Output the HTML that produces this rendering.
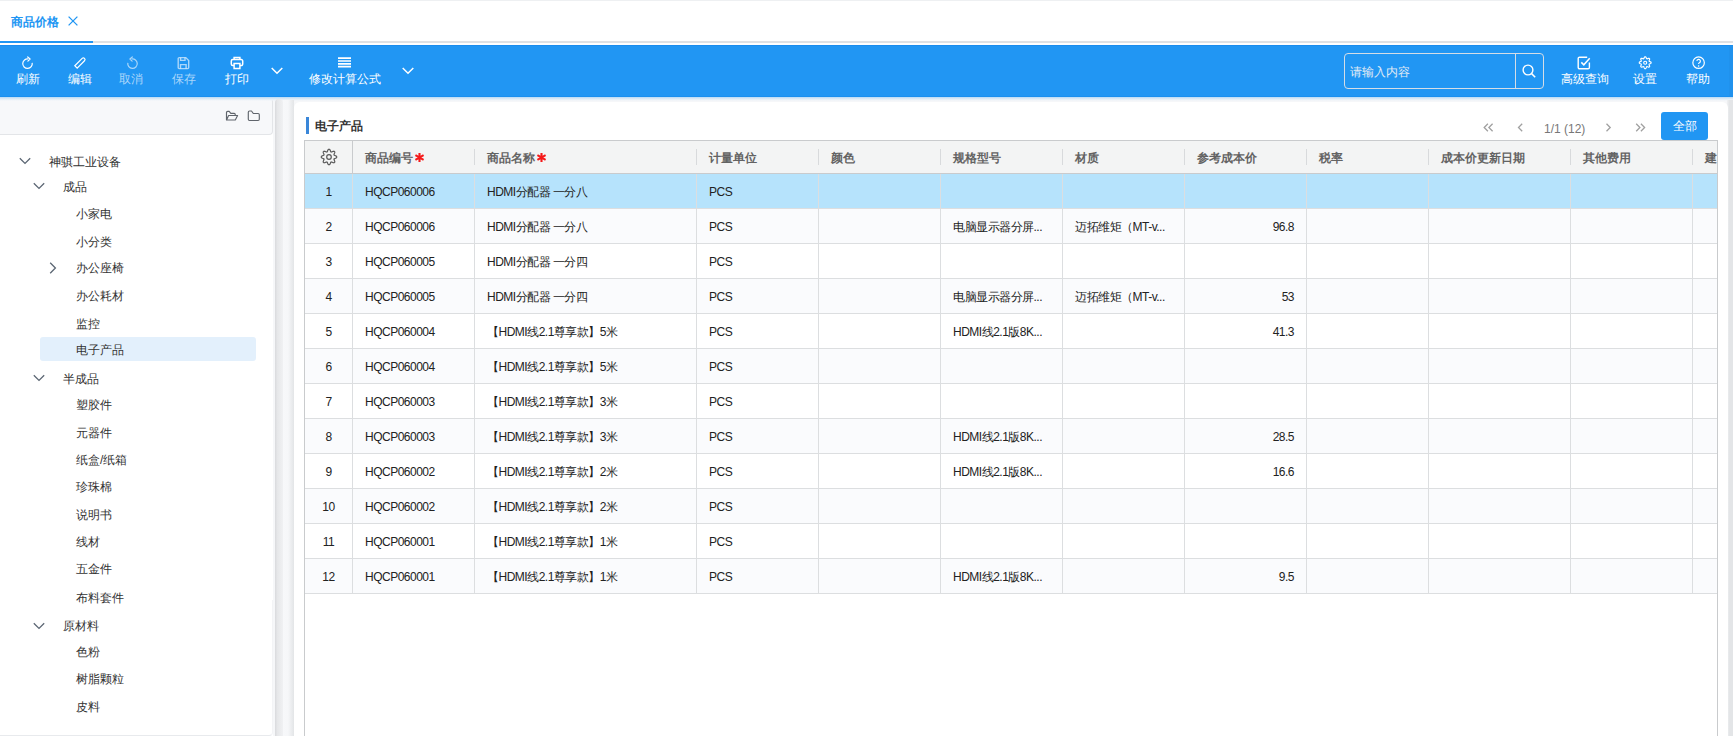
<!DOCTYPE html><html><head><meta charset="utf-8"><style>*{box-sizing:border-box;margin:0;padding:0}
html,body{width:1733px;height:736px;overflow:hidden;background:#fff;font-family:"Liberation Sans",sans-serif;font-size:12px;color:#333}
.abs{position:absolute}
#tabtxt{left:11px;top:15px;font-weight:bold;color:#2196f3;line-height:14px}
#toolbar{left:0;top:45px;width:1733px;height:52px;background:#2196f3}
.tbl{position:absolute;top:72px;line-height:14px;text-align:center;white-space:nowrap}
.tree{position:absolute;line-height:14px;white-space:nowrap;color:#333}
#tbl{overflow:hidden;background:#fff;border:1px solid #c9cbcd}
.c{position:absolute;line-height:14px;white-space:nowrap;color:#222;letter-spacing:-0.5px}
.h{position:absolute;line-height:14px;white-space:nowrap;color:#636363;font-weight:bold;top:10px}
.req{color:#f00;font-weight:bold}
.pg{position:absolute;line-height:14px}
</style></head><body><div class="abs" style="left:0;top:0;width:1733px;height:1px;background:#eef0f2"></div>
<div class="abs" style="left:0;top:41px;width:1733px;height:2px;background:#dfe1e4"></div>
<div class="abs" style="left:0;top:41px;width:93px;height:2px;background:#2196f3"></div>
<div class="abs" id="tabtxt">商品价格</div>
<svg class="abs" style="left:68px;top:16px" width="10" height="10" viewBox="0 0 10 10"><path d="M0.6 0.6L9.4 9.4M9.4 0.6L0.6 9.4" stroke="#2196f3" stroke-width="1.3" fill="none"/></svg>
<div class="abs" id="toolbar"></div>
<div class="abs" style="left:0;top:45px;width:1733px;height:1px;background:#1a8cee"></div>
<div class="abs" style="left:0;top:96px;width:1733px;height:1px;background:#1a8fef"></div>
<div class="abs" style="left:1729px;top:45px;width:4px;height:52px;background:#1f8fea;opacity:.6"></div>
<div class="tbl" style="left:-2.3999999999999986px;width:60px;color:#fff">刷新</div>
<svg class="abs" style="left:21px;top:56px" width="14" height="14" viewBox="0 0 14 14"><path d="M7.33 2.97A4.75 4.75 0 1 0 11.18 6.83" stroke="#fff" stroke-width="1.2" fill="none"/><path d="M6.7 1.0L9.1 3.0L6.9 5.1" stroke="#fff" stroke-width="1.2" fill="none" stroke-linejoin="round" stroke-linecap="round"/></svg>
<div class="tbl" style="left:50.0px;width:60px;color:#fff">编辑</div>
<svg class="abs" style="left:73px;top:56px" width="14" height="14" viewBox="0 0 14 14"><g transform="translate(7.3 6.6) rotate(-45)"><path d="M-6.1 -1.65H4.3A1.65 1.65 0 0 1 4.3 1.65H-6.1Z" stroke="#fff" stroke-width="1.2" fill="none"/></g></svg>
<div class="tbl" style="left:101.30000000000001px;width:60px;color:rgba(255,255,255,.62)">取消</div>
<svg class="abs" style="left:125px;top:56px" width="14" height="14" viewBox="0 0 14 14"><path d="M6.67 2.97A4.75 4.75 0 1 1 2.82 6.83" stroke="rgba(255,255,255,.62)" stroke-width="1.2" fill="none"/><path d="M7.3 1.0L4.9 3.0L7.1 5.1" stroke="rgba(255,255,255,.62)" stroke-width="1.2" fill="none" stroke-linejoin="round" stroke-linecap="round"/></svg>
<div class="tbl" style="left:153.5px;width:60px;color:rgba(255,255,255,.62)">保存</div>
<svg class="abs" style="left:177px;top:56px" width="13" height="14" viewBox="0 0 13 14"><path d="M2.2 1.6h6.6l2.9 2.9v7.1a1 1 0 0 1-1 1H2.2a1 1 0 0 1-1-1V2.6a1 1 0 0 1 1-1Z" stroke="rgba(255,255,255,.62)" stroke-width="1.4" fill="none"/><path d="M3.6 1.8v2.6h4.4V1.8M3.5 12.4V8.6h5.6v3.8" stroke="rgba(255,255,255,.62)" stroke-width="1.4" fill="none"/></svg>
<div class="tbl" style="left:207.0px;width:60px;color:#fff">打印</div>
<svg class="abs" style="left:230px;top:56px" width="14" height="14" viewBox="0 0 14 14"><path d="M4.1 3.5V1.6h5.8v1.9M4 9.6H2.8a1.5 1.5 0 0 1-1.5-1.5V5.1a1.5 1.5 0 0 1 1.5-1.5h8.4a1.5 1.5 0 0 1 1.5 1.5v3a1.5 1.5 0 0 1-1.5 1.5H10" stroke="#fff" stroke-width="1.5" fill="none"/><path d="M4.1 7.6h5.8v4.8H4.1Z" stroke="#fff" stroke-width="1.5" fill="none"/></svg>
<svg class="abs" style="left:270.5px;top:67px" width="12" height="8" viewBox="0 0 12 8"><path d="M0.7 1L6 6.3 11.3 1" stroke="#fff" stroke-width="1.5" fill="none"/></svg>
<div class="tbl" style="left:299.5px;width:90px;color:#fff">修改计算公式</div>
<svg class="abs" style="left:338px;top:57px" width="13" height="12" viewBox="0 0 13 12"><path d="M0 1.2h13M0 4h13M0 6.8h13M0 9.6h13" stroke="#fff" stroke-width="1.7"/></svg>
<svg class="abs" style="left:401.5px;top:67px" width="12" height="8" viewBox="0 0 12 8"><path d="M0.7 1L6 6.3 11.3 1" stroke="#fff" stroke-width="1.5" fill="none"/></svg>
<div class="abs" style="left:1344px;top:53px;width:200px;height:36px;border:1px solid #d5dde6;border-radius:4px"></div>
<div class="abs" style="left:1515px;top:54px;width:1px;height:34px;background:#d5dde6"></div>
<div class="abs" style="left:1350px;top:65px;line-height:14px;color:#e4ecf4">请输入内容</div>
<svg class="abs" style="left:1522px;top:64px" width="15" height="14" viewBox="0 0 15 14"><circle cx="6" cy="6" r="4.9" stroke="#fff" stroke-width="1.4" fill="none"/><path d="M9.6 9.6L13.2 13.2" stroke="#fff" stroke-width="1.5"/></svg>
<div class="tbl" style="left:1554.5px;width:60px;color:#fff">高级查询</div>
<svg class="abs" style="left:1577px;top:56px" width="15" height="14" viewBox="0 0 15 14"><path d="M12.4 6.5v4.9a1.4 1.4 0 0 1-1.4 1.4H2.6a1.4 1.4 0 0 1-1.4-1.4V2.6a1.4 1.4 0 0 1 1.4-1.4h7.6" stroke="#fff" stroke-width="1.4" fill="none"/><path d="M4.3 6.4l2.5 2.4 5.9-6.6" stroke="#fff" stroke-width="1.5" fill="none"/></svg>
<div class="tbl" style="left:1615.3px;width:60px;color:#fff">设置</div>
<svg class="abs" style="left:1638px;top:56px" width="14" height="14" viewBox="0 0 14 14"><path d="M7.20 0.80 L7.43 0.80 L7.66 0.84 L7.87 1.07 L8.04 1.37 L8.19 1.70 L8.32 2.03 L8.43 2.33 L8.54 2.59 L8.69 2.67 L8.85 2.73 L9.00 2.79 L9.16 2.85 L9.42 2.74 L9.71 2.60 L10.03 2.46 L10.37 2.33 L10.71 2.25 L11.02 2.23 L11.20 2.37 L11.37 2.53 L11.53 2.70 L11.67 2.88 L11.65 3.19 L11.57 3.53 L11.44 3.87 L11.30 4.19 L11.16 4.48 L11.05 4.74 L11.11 4.90 L11.17 5.05 L11.23 5.21 L11.31 5.36 L11.57 5.47 L11.87 5.58 L12.20 5.71 L12.53 5.86 L12.83 6.03 L13.06 6.24 L13.10 6.47 L13.10 6.70 L13.10 6.93 L13.06 7.16 L12.83 7.37 L12.53 7.54 L12.20 7.69 L11.87 7.82 L11.57 7.93 L11.31 8.04 L11.23 8.19 L11.17 8.35 L11.11 8.50 L11.05 8.66 L11.16 8.92 L11.30 9.21 L11.44 9.53 L11.57 9.87 L11.65 10.21 L11.67 10.52 L11.53 10.70 L11.37 10.87 L11.20 11.03 L11.02 11.17 L10.71 11.15 L10.37 11.07 L10.03 10.94 L9.71 10.80 L9.42 10.66 L9.16 10.55 L9.00 10.61 L8.85 10.67 L8.69 10.73 L8.54 10.81 L8.43 11.07 L8.32 11.37 L8.19 11.70 L8.04 12.03 L7.87 12.33 L7.66 12.56 L7.43 12.60 L7.20 12.60 L6.97 12.60 L6.74 12.56 L6.53 12.33 L6.36 12.03 L6.21 11.70 L6.08 11.37 L5.97 11.07 L5.86 10.81 L5.71 10.73 L5.55 10.67 L5.40 10.61 L5.24 10.55 L4.98 10.66 L4.69 10.80 L4.37 10.94 L4.03 11.07 L3.69 11.15 L3.38 11.17 L3.20 11.03 L3.03 10.87 L2.87 10.70 L2.73 10.52 L2.75 10.21 L2.83 9.87 L2.96 9.53 L3.10 9.21 L3.24 8.92 L3.35 8.66 L3.29 8.50 L3.23 8.35 L3.17 8.19 L3.09 8.04 L2.83 7.93 L2.53 7.82 L2.20 7.69 L1.87 7.54 L1.57 7.37 L1.34 7.16 L1.30 6.93 L1.30 6.70 L1.30 6.47 L1.34 6.24 L1.57 6.03 L1.87 5.86 L2.20 5.71 L2.53 5.58 L2.83 5.47 L3.09 5.36 L3.17 5.21 L3.23 5.05 L3.29 4.90 L3.35 4.74 L3.24 4.48 L3.10 4.19 L2.96 3.87 L2.83 3.53 L2.75 3.19 L2.73 2.88 L2.87 2.70 L3.03 2.53 L3.20 2.37 L3.38 2.23 L3.69 2.25 L4.03 2.33 L4.37 2.46 L4.69 2.60 L4.98 2.74 L5.24 2.85 L5.40 2.79 L5.55 2.73 L5.71 2.67 L5.86 2.59 L5.97 2.33 L6.08 2.03 L6.21 1.70 L6.36 1.37 L6.53 1.07 L6.74 0.84 L6.97 0.80Z" stroke="#fff" stroke-width="1.15" fill="none" stroke-linejoin="round"/><circle cx="7.2" cy="6.7" r="1.5" stroke="#fff" stroke-width="1.15" fill="none"/></svg>
<div class="tbl" style="left:1668.4px;width:60px;color:#fff">帮助</div>
<svg class="abs" style="left:1692px;top:56px" width="14" height="14" viewBox="0 0 14 14"><circle cx="6.6" cy="6.7" r="5.75" stroke="#fff" stroke-width="1.2" fill="none"/><path d="M4.9 5.1a1.75 1.75 0 1 1 2.5 1.6c-.5.25-.8.55-.8 1.1v.3" stroke="#fff" stroke-width="1.15" fill="none"/><circle cx="6.6" cy="9.9" r=".75" fill="#fff"/></svg>
<div class="abs" style="left:0;top:97px;width:1733px;height:639px;background:#f6f7f9"></div>
<div class="abs" style="left:0;top:97px;width:273px;height:639px;background:#fff"></div>
<div class="abs" style="left:0;top:600px;width:273px;height:136px;border-bottom:1px solid #e8eaed;border-right:1px solid #f3f4f6;border-radius:0 0 4px 0"></div>
<div class="abs" style="left:0;top:98px;width:273px;height:37px;background:#f7f8fa;border:1px solid #e3e5e8;border-left:none;border-top:none;border-radius:0 4px 4px 0"></div>
<div class="abs" style="left:0;top:97px;width:1733px;height:4px;background:linear-gradient(#b5daf6,#d6e7f5 35%,#ecf2f8 70%,rgba(247,248,250,0))"></div>
<div class="abs" style="left:275px;top:99px;width:8px;height:637px;border-radius:4px 4px 0 0;background:linear-gradient(90deg,#d9dadd,#e6e7e9 30%,#f0f1f3 100%)"></div>
<div class="abs" style="left:283px;top:100px;width:11px;height:636px;background:linear-gradient(90deg,#f7f8fa,#f6f7f9 45%,#e3e5e7 100%)"></div>
<div class="abs" style="left:1727px;top:100px;width:6px;height:636px;background:linear-gradient(90deg,#f0f1f3,#e3e5e7 40%,#e3e5e7)"></div>
<div class="abs" style="left:294px;top:102px;width:1434px;height:650px;background:#fff;border-radius:6px"></div>
<svg class="abs" style="left:224px;top:109px" width="15" height="13" viewBox="0 0 15 13"><path d="M2.5 11V3.6a1.2 1.2 0 0 1 1.2-1.2H5.2L6.8 4.3H10.2a1 1 0 0 1 1 1V6.4M2.5 11L4.6 6.5H13.6L11.3 11Z" stroke="#60656c" stroke-width="1.15" fill="none" stroke-linejoin="round"/></svg>
<svg class="abs" style="left:246px;top:109px" width="15" height="13" viewBox="0 0 15 13"><path d="M2.3 10.3V3.2a1.2 1.2 0 0 1 1.2-1.2H5.5L7.3 4.5H12.1a1.2 1.2 0 0 1 1.2 1.2V10.3a1.2 1.2 0 0 1-1.2 1.2H3.5a1.2 1.2 0 0 1-1.2-1.2Z" stroke="#60656c" stroke-width="1.15" fill="none" stroke-linejoin="round"/></svg>
<div class="abs" style="left:40px;top:337px;width:216px;height:24px;background:#e3f0fc;border-radius:3px"></div>
<div class="tree" style="left:49px;top:154.8px">神骐工业设备</div>
<svg class="abs" style="left:19px;top:157.3px" width="12" height="8" viewBox="0 0 12 8"><path d="M0.8 1.2L6 6.4 11.2 1.2" stroke="#5b6673" stroke-width="1.3" fill="none"/></svg>
<div class="tree" style="left:63px;top:179.8px">成品</div>
<svg class="abs" style="left:33px;top:182.3px" width="12" height="8" viewBox="0 0 12 8"><path d="M0.8 1.2L6 6.4 11.2 1.2" stroke="#5b6673" stroke-width="1.3" fill="none"/></svg>
<div class="tree" style="left:76px;top:206.9px">小家电</div>
<div class="tree" style="left:76px;top:234.7px">小分类</div>
<div class="tree" style="left:76px;top:261.0px">办公座椅</div>
<svg class="abs" style="left:49px;top:261.5px" width="8" height="12" viewBox="0 0 8 12"><path d="M1.2 0.8L6.4 6 1.2 11.2" stroke="#5b6673" stroke-width="1.3" fill="none"/></svg>
<div class="tree" style="left:76px;top:288.5px">办公耗材</div>
<div class="tree" style="left:76px;top:316.5px">监控</div>
<div class="tree" style="left:76px;top:343.2px">电子产品</div>
<div class="tree" style="left:63px;top:371.9px">半成品</div>
<svg class="abs" style="left:33px;top:374.4px" width="12" height="8" viewBox="0 0 12 8"><path d="M0.8 1.2L6 6.4 11.2 1.2" stroke="#5b6673" stroke-width="1.3" fill="none"/></svg>
<div class="tree" style="left:76px;top:398.2px">塑胶件</div>
<div class="tree" style="left:76px;top:425.6px">元器件</div>
<div class="tree" style="left:76px;top:453.2px">纸盒/纸箱</div>
<div class="tree" style="left:76px;top:480.0px">珍珠棉</div>
<div class="tree" style="left:76px;top:507.6px">说明书</div>
<div class="tree" style="left:76px;top:535.4px">线材</div>
<div class="tree" style="left:76px;top:562.3px">五金件</div>
<div class="tree" style="left:76px;top:590.5px">布料套件</div>
<div class="tree" style="left:63px;top:619.1px">原材料</div>
<svg class="abs" style="left:33px;top:621.6px" width="12" height="8" viewBox="0 0 12 8"><path d="M0.8 1.2L6 6.4 11.2 1.2" stroke="#5b6673" stroke-width="1.3" fill="none"/></svg>
<div class="tree" style="left:76px;top:645.2px">色粉</div>
<div class="tree" style="left:76px;top:672.4px">树脂颗粒</div>
<div class="tree" style="left:76px;top:699.6px">皮料</div>
<div class="abs" style="left:306px;top:117px;width:3px;height:17px;background:#3a87d9"></div>
<div class="abs" style="left:315px;top:119px;font-weight:bold;line-height:14px;color:#333">电子产品</div>
<svg class="abs" style="left:1483px;top:123px" width="11" height="9" viewBox="0 0 11 9"><path d="M4.9 0.8L1.2 4.5 4.9 8.2M9.6 0.8L5.9 4.5 9.6 8.2" stroke="#a0a0a0" stroke-width="1.3" fill="none"/></svg>
<svg class="abs" style="left:1517px;top:123px" width="7" height="9" viewBox="0 0 7 9"><path d="M5.2 0.8L1.5 4.5 5.2 8.2" stroke="#a0a0a0" stroke-width="1.3" fill="none"/></svg>
<div class="pg" style="left:1544px;top:122px;color:#777">1/1 (12)</div>
<svg class="abs" style="left:1605px;top:123px" width="7" height="9" viewBox="0 0 7 9"><path d="M1.5 0.8L5.2 4.5 1.5 8.2" stroke="#a0a0a0" stroke-width="1.3" fill="none"/></svg>
<svg class="abs" style="left:1635px;top:123px" width="11" height="9" viewBox="0 0 11 9"><path d="M1.2 0.8L4.9 4.5 1.2 8.2M5.9 0.8L9.6 4.5 5.9 8.2" stroke="#a0a0a0" stroke-width="1.3" fill="none"/></svg>
<div class="abs" style="left:1661px;top:112px;width:47px;height:28px;background:#2196f3;border-radius:3px;color:#fff;text-align:center;line-height:28px">全部</div>
<div class="abs" id="tbl" style="left:304px;top:140px;width:1414px;height:600px">
<div class="abs" style="left:0;top:0;width:1420px;height:33px;background:#f3f4f4;border-bottom:1px solid #c9cbcd"></div>
<div class="abs" style="left:47px;top:0;width:1px;height:33px;background:#c9cbcd"></div>
<div class="h" style="left:60px">商品编号</div>
<svg style="position:absolute;left:108.5px;top:12px" width="11" height="9" viewBox="0 0 11 9"><path d="M5.5 0.1V8.9M1.4 2.2L9.6 6.8M9.6 2.2L1.4 6.8" stroke="#f51a1a" stroke-width="2.1"/></svg>
<div class="abs" style="left:169px;top:8px;width:1px;height:16px;background:#d8dadc"></div>
<div class="h" style="left:182px">商品名称</div>
<svg style="position:absolute;left:230.5px;top:12px" width="11" height="9" viewBox="0 0 11 9"><path d="M5.5 0.1V8.9M1.4 2.2L9.6 6.8M9.6 2.2L1.4 6.8" stroke="#f51a1a" stroke-width="2.1"/></svg>
<div class="abs" style="left:391px;top:8px;width:1px;height:16px;background:#d8dadc"></div>
<div class="h" style="left:404px">计量单位</div>
<div class="abs" style="left:513px;top:8px;width:1px;height:16px;background:#d8dadc"></div>
<div class="h" style="left:526px">颜色</div>
<div class="abs" style="left:635px;top:8px;width:1px;height:16px;background:#d8dadc"></div>
<div class="h" style="left:648px">规格型号</div>
<div class="abs" style="left:757px;top:8px;width:1px;height:16px;background:#d8dadc"></div>
<div class="h" style="left:770px">材质</div>
<div class="abs" style="left:879px;top:8px;width:1px;height:16px;background:#d8dadc"></div>
<div class="h" style="left:892px">参考成本价</div>
<div class="abs" style="left:1001px;top:8px;width:1px;height:16px;background:#d8dadc"></div>
<div class="h" style="left:1014px">税率</div>
<div class="abs" style="left:1123px;top:8px;width:1px;height:16px;background:#d8dadc"></div>
<div class="h" style="left:1136px">成本价更新日期</div>
<div class="abs" style="left:1265px;top:8px;width:1px;height:16px;background:#d8dadc"></div>
<div class="h" style="left:1278px">其他费用</div>
<div class="abs" style="left:1387px;top:8px;width:1px;height:16px;background:#d8dadc"></div>
<div class="h" style="left:1400px">建</div>
<svg class="abs" style="left:14px;top:6px" width="20" height="20" viewBox="0 0 20 20"><path d="M10.00 2.30 L10.30 2.31 L10.60 2.40 L10.86 2.71 L11.09 3.10 L11.29 3.53 L11.45 3.96 L11.59 4.36 L11.72 4.70 L11.90 4.84 L12.10 4.92 L12.30 5.01 L12.53 5.03 L12.86 4.89 L13.24 4.71 L13.67 4.51 L14.11 4.34 L14.55 4.23 L14.95 4.20 L15.23 4.35 L15.44 4.56 L15.65 4.77 L15.80 5.05 L15.77 5.45 L15.66 5.89 L15.49 6.33 L15.29 6.76 L15.11 7.14 L14.97 7.47 L14.99 7.70 L15.08 7.90 L15.16 8.10 L15.30 8.28 L15.64 8.41 L16.04 8.55 L16.47 8.71 L16.90 8.91 L17.29 9.14 L17.60 9.40 L17.69 9.70 L17.70 10.00 L17.69 10.30 L17.60 10.60 L17.29 10.86 L16.90 11.09 L16.47 11.29 L16.04 11.45 L15.64 11.59 L15.30 11.72 L15.16 11.90 L15.08 12.10 L14.99 12.30 L14.97 12.53 L15.11 12.86 L15.29 13.24 L15.49 13.67 L15.66 14.11 L15.77 14.55 L15.80 14.95 L15.65 15.23 L15.44 15.44 L15.23 15.65 L14.95 15.80 L14.55 15.77 L14.11 15.66 L13.67 15.49 L13.24 15.29 L12.86 15.11 L12.53 14.97 L12.30 14.99 L12.10 15.08 L11.90 15.16 L11.72 15.30 L11.59 15.64 L11.45 16.04 L11.29 16.47 L11.09 16.90 L10.86 17.29 L10.60 17.60 L10.30 17.69 L10.00 17.70 L9.70 17.69 L9.40 17.60 L9.14 17.29 L8.91 16.90 L8.71 16.47 L8.55 16.04 L8.41 15.64 L8.28 15.30 L8.10 15.16 L7.90 15.08 L7.70 14.99 L7.47 14.97 L7.14 15.11 L6.76 15.29 L6.33 15.49 L5.89 15.66 L5.45 15.77 L5.05 15.80 L4.77 15.65 L4.56 15.44 L4.35 15.23 L4.20 14.95 L4.23 14.55 L4.34 14.11 L4.51 13.67 L4.71 13.24 L4.89 12.86 L5.03 12.53 L5.01 12.30 L4.92 12.10 L4.84 11.90 L4.70 11.72 L4.36 11.59 L3.96 11.45 L3.53 11.29 L3.10 11.09 L2.71 10.86 L2.40 10.60 L2.31 10.30 L2.30 10.00 L2.31 9.70 L2.40 9.40 L2.71 9.14 L3.10 8.91 L3.53 8.71 L3.96 8.55 L4.36 8.41 L4.70 8.28 L4.84 8.10 L4.92 7.90 L5.01 7.70 L5.03 7.47 L4.89 7.14 L4.71 6.76 L4.51 6.33 L4.34 5.89 L4.23 5.45 L4.20 5.05 L4.35 4.77 L4.56 4.56 L4.77 4.35 L5.05 4.20 L5.45 4.23 L5.89 4.34 L6.33 4.51 L6.76 4.71 L7.14 4.89 L7.47 5.03 L7.70 5.01 L7.90 4.92 L8.10 4.84 L8.28 4.70 L8.41 4.36 L8.55 3.96 L8.71 3.53 L8.91 3.10 L9.14 2.71 L9.40 2.40 L9.70 2.31Z" stroke="#5a5a5a" stroke-width="1.2" fill="none" stroke-linejoin="round"/><circle cx="10" cy="10" r="2.3" stroke="#5a5a5a" stroke-width="1.2" fill="none"/></svg>
<div class="abs" style="left:0;top:33px;width:1420px;height:35px;background:#b6e3fc;border-bottom:1px solid #dcdee0"></div>
<div class="c" style="left:0;width:47px;text-align:center;top:44px">1</div>
<div class="c" style="left:60px;top:44px">HQCP060006</div>
<div class="c" style="left:182px;top:44px">HDMI分配器 一分八</div>
<div class="c" style="left:404px;top:44px">PCS</div>
<div class="abs" style="left:0;top:68px;width:1420px;height:35px;background:#fafbfd;border-bottom:1px solid #dcdee0"></div>
<div class="c" style="left:0;width:47px;text-align:center;top:79px">2</div>
<div class="c" style="left:60px;top:79px">HQCP060006</div>
<div class="c" style="left:182px;top:79px">HDMI分配器 一分八</div>
<div class="c" style="left:404px;top:79px">PCS</div>
<div class="c" style="left:648px;top:79px">电脑显示器分屏...</div>
<div class="c" style="left:770px;top:79px">迈拓维矩（MT-v...</div>
<div class="c" style="left:879px;width:110px;top:79px;text-align:right">96.8</div>
<div class="abs" style="left:0;top:103px;width:1420px;height:35px;background:#fff;border-bottom:1px solid #dcdee0"></div>
<div class="c" style="left:0;width:47px;text-align:center;top:114px">3</div>
<div class="c" style="left:60px;top:114px">HQCP060005</div>
<div class="c" style="left:182px;top:114px">HDMI分配器 一分四</div>
<div class="c" style="left:404px;top:114px">PCS</div>
<div class="abs" style="left:0;top:138px;width:1420px;height:35px;background:#fafbfd;border-bottom:1px solid #dcdee0"></div>
<div class="c" style="left:0;width:47px;text-align:center;top:149px">4</div>
<div class="c" style="left:60px;top:149px">HQCP060005</div>
<div class="c" style="left:182px;top:149px">HDMI分配器 一分四</div>
<div class="c" style="left:404px;top:149px">PCS</div>
<div class="c" style="left:648px;top:149px">电脑显示器分屏...</div>
<div class="c" style="left:770px;top:149px">迈拓维矩（MT-v...</div>
<div class="c" style="left:879px;width:110px;top:149px;text-align:right">53</div>
<div class="abs" style="left:0;top:173px;width:1420px;height:35px;background:#fff;border-bottom:1px solid #dcdee0"></div>
<div class="c" style="left:0;width:47px;text-align:center;top:184px">5</div>
<div class="c" style="left:60px;top:184px">HQCP060004</div>
<div class="c" style="left:182px;top:184px">【HDMI线2.1尊享款】5米</div>
<div class="c" style="left:404px;top:184px">PCS</div>
<div class="c" style="left:648px;top:184px">HDMI线2.1版8K...</div>
<div class="c" style="left:879px;width:110px;top:184px;text-align:right">41.3</div>
<div class="abs" style="left:0;top:208px;width:1420px;height:35px;background:#fafbfd;border-bottom:1px solid #dcdee0"></div>
<div class="c" style="left:0;width:47px;text-align:center;top:219px">6</div>
<div class="c" style="left:60px;top:219px">HQCP060004</div>
<div class="c" style="left:182px;top:219px">【HDMI线2.1尊享款】5米</div>
<div class="c" style="left:404px;top:219px">PCS</div>
<div class="abs" style="left:0;top:243px;width:1420px;height:35px;background:#fff;border-bottom:1px solid #dcdee0"></div>
<div class="c" style="left:0;width:47px;text-align:center;top:254px">7</div>
<div class="c" style="left:60px;top:254px">HQCP060003</div>
<div class="c" style="left:182px;top:254px">【HDMI线2.1尊享款】3米</div>
<div class="c" style="left:404px;top:254px">PCS</div>
<div class="abs" style="left:0;top:278px;width:1420px;height:35px;background:#fafbfd;border-bottom:1px solid #dcdee0"></div>
<div class="c" style="left:0;width:47px;text-align:center;top:289px">8</div>
<div class="c" style="left:60px;top:289px">HQCP060003</div>
<div class="c" style="left:182px;top:289px">【HDMI线2.1尊享款】3米</div>
<div class="c" style="left:404px;top:289px">PCS</div>
<div class="c" style="left:648px;top:289px">HDMI线2.1版8K...</div>
<div class="c" style="left:879px;width:110px;top:289px;text-align:right">28.5</div>
<div class="abs" style="left:0;top:313px;width:1420px;height:35px;background:#fff;border-bottom:1px solid #dcdee0"></div>
<div class="c" style="left:0;width:47px;text-align:center;top:324px">9</div>
<div class="c" style="left:60px;top:324px">HQCP060002</div>
<div class="c" style="left:182px;top:324px">【HDMI线2.1尊享款】2米</div>
<div class="c" style="left:404px;top:324px">PCS</div>
<div class="c" style="left:648px;top:324px">HDMI线2.1版8K...</div>
<div class="c" style="left:879px;width:110px;top:324px;text-align:right">16.6</div>
<div class="abs" style="left:0;top:348px;width:1420px;height:35px;background:#fafbfd;border-bottom:1px solid #dcdee0"></div>
<div class="c" style="left:0;width:47px;text-align:center;top:359px">10</div>
<div class="c" style="left:60px;top:359px">HQCP060002</div>
<div class="c" style="left:182px;top:359px">【HDMI线2.1尊享款】2米</div>
<div class="c" style="left:404px;top:359px">PCS</div>
<div class="abs" style="left:0;top:383px;width:1420px;height:35px;background:#fff;border-bottom:1px solid #dcdee0"></div>
<div class="c" style="left:0;width:47px;text-align:center;top:394px">11</div>
<div class="c" style="left:60px;top:394px">HQCP060001</div>
<div class="c" style="left:182px;top:394px">【HDMI线2.1尊享款】1米</div>
<div class="c" style="left:404px;top:394px">PCS</div>
<div class="abs" style="left:0;top:418px;width:1420px;height:35px;background:#fafbfd;border-bottom:1px solid #dcdee0"></div>
<div class="c" style="left:0;width:47px;text-align:center;top:429px">12</div>
<div class="c" style="left:60px;top:429px">HQCP060001</div>
<div class="c" style="left:182px;top:429px">【HDMI线2.1尊享款】1米</div>
<div class="c" style="left:404px;top:429px">PCS</div>
<div class="c" style="left:648px;top:429px">HDMI线2.1版8K...</div>
<div class="c" style="left:879px;width:110px;top:429px;text-align:right">9.5</div>
<div class="abs" style="left:47px;top:33px;width:1px;height:420px;background:#dcdee0"></div>
<div class="abs" style="left:169px;top:33px;width:1px;height:420px;background:#dcdee0"></div>
<div class="abs" style="left:391px;top:33px;width:1px;height:420px;background:#dcdee0"></div>
<div class="abs" style="left:513px;top:33px;width:1px;height:420px;background:#dcdee0"></div>
<div class="abs" style="left:635px;top:33px;width:1px;height:420px;background:#dcdee0"></div>
<div class="abs" style="left:757px;top:33px;width:1px;height:420px;background:#dcdee0"></div>
<div class="abs" style="left:879px;top:33px;width:1px;height:420px;background:#dcdee0"></div>
<div class="abs" style="left:1001px;top:33px;width:1px;height:420px;background:#dcdee0"></div>
<div class="abs" style="left:1123px;top:33px;width:1px;height:420px;background:#dcdee0"></div>
<div class="abs" style="left:1265px;top:33px;width:1px;height:420px;background:#dcdee0"></div>
<div class="abs" style="left:1387px;top:33px;width:1px;height:420px;background:#dcdee0"></div>
</div></body></html>
